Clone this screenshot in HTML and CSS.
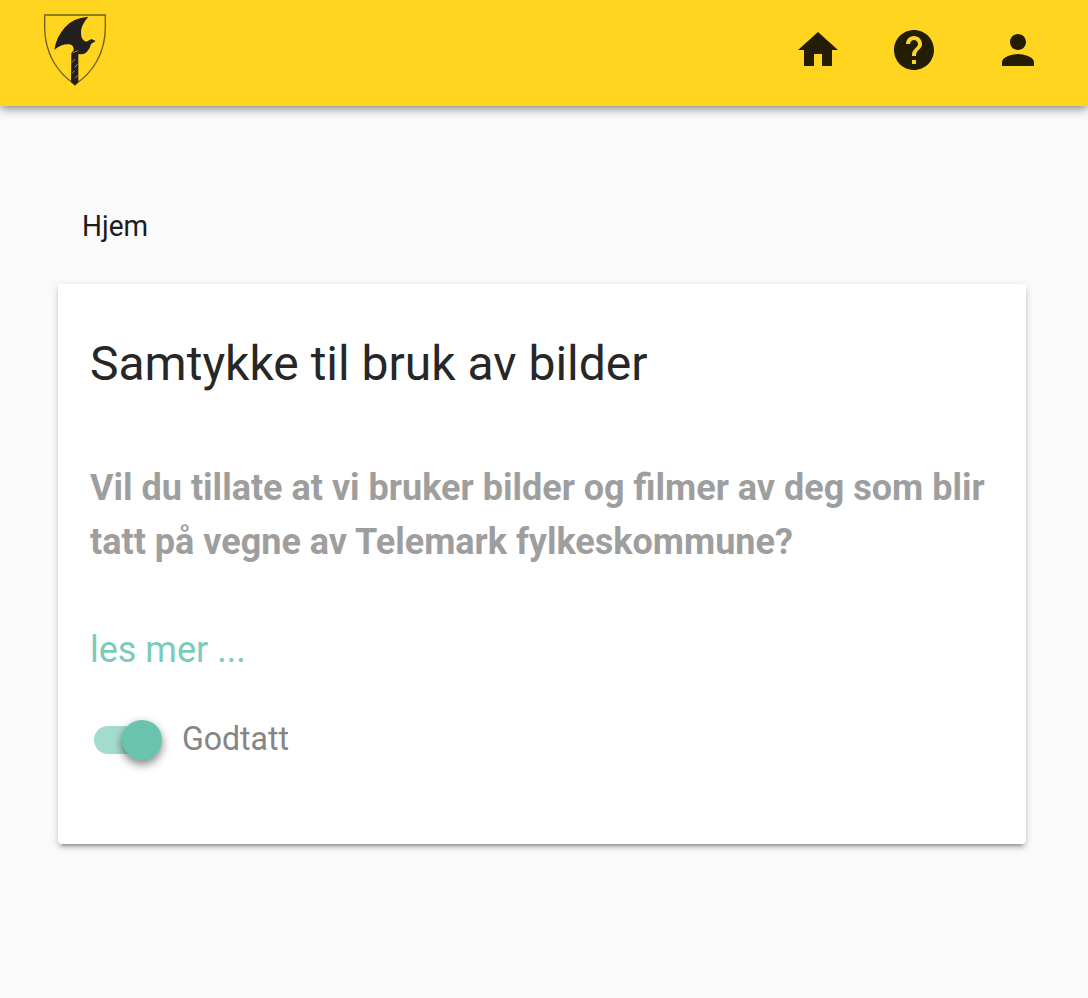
FILE: index.html
```html
<!DOCTYPE html>
<html lang="no">
<head>
<meta charset="utf-8">
<title>Samtykke</title>
<link rel="stylesheet" href="styles.css">
</head>
<body>
<header class="toolbar">
  <svg class="logo" viewBox="42 42 186 219" aria-label="Telemark">
    <path class="shield" d="M44 45H226V82C226 161 187 219 135 253C83 219 44 161 44 82Z"/>
    <path class="axe" d="M175 50Q127 54 105 82Q79 111 73 149Q98 130 119 133Q132 136 131 151L124 160L123 246L135 257L145 246V161Q161 166 171 155Q180 147 183 132L197 123L184 117L169 125Q154 121 153 101Q151 77 175 50Z"/>
    <path class="grip" d="M129 158L145 152M126 187L136 177M134 203L143 192M127 219L134 213M135 235L143 226"/>
  </svg>
  <nav class="actions">
    <svg class="icon" viewBox="0 0 24 24"><path d="M10 20v-6h4v6h5v-8h3L12 3 2 12h3v8z"/></svg>
    <svg class="icon" viewBox="0 0 24 24"><path d="M12 2C6.48 2 2 6.48 2 12s4.480 10 10 10 10-4.480 10-10S17.520 2 12 2zm1 17h-2v-2h2v2zm2.070-7.750l-.9.920C13.450 12.900 13 13.500 13 15h-2v-.5c0-1.100.45-2.100 1.170-2.830l1.240-1.260c.37-.36.59-.86.59-1.410 0-1.100-.9-2-2-2s-2 .9-2 2H8c0-2.210 1.790-4 4-4s4 1.790 4 4c0 .88-.36 1.680-.93 2.250z"/></svg>
    <svg class="icon person" viewBox="0 0 24 24"><path d="M12 12c2.210 0 4-1.790 4-4s-1.790-4-4-4-4 1.790-4 4 1.790 4 4 4zm0 2c-2.670 0-8 1.340-8 4v2h16v-2c0-2.660-5.330-4-8-4z"/></svg>
  </nav>
</header>
<main class="content">
  <nav class="crumb">Hjem</nav>
  <section class="card">
    <h1 class="title">Samtykke til bruk av bilder</h1>
    <p class="question">Vil du tillate at vi bruker bilder og filmer av deg som blir<br>tatt på vegne av Telemark fylkeskommune?</p>
    <a class="more">les mer ...</a>
    <div class="consent">
      <span class="switch"><span class="thumb"></span></span>
      <span class="label">Godtatt</span>
    </div>
  </section>
</main>
</body>
</html>
```
FILE: styles.css
```css
* { box-sizing: border-box; }
body {
  margin: 0;
  min-height: 998px;
  background: #fafafa;
  font-family: Roboto, sans-serif;
  color: #212121;
}
.toolbar {
  display: flex;
  justify-content: space-between;
  height: 106px;
  padding: 14px 46px 0 44px;
  background: #ffd520;
  box-shadow: 0 2px 10px rgba(0,0,0,.52);
}
.logo { width: 62px; height: 73px; }
.shield { fill: none; stroke: #6f5f20; stroke-width: 4; }
.axe { fill: #231f20; }
.grip { fill: none; stroke: #a68d24; stroke-width: 3; }
.actions { display: flex; gap: 48px; padding-top: 12px; }
.icon { width: 48px; height: 48px; fill: #231d05; }
.person { margin-left: 8px; }
.content { padding: 100px 62px 0 58px; }
.crumb { padding-left: 24px; font-size: 28px; line-height: 40px; color: #1c1c1c; transform: scaleY(1.07); }
.card {
  height: 560px;
  margin-top: 38px;
  padding: 48px 32px 0;
  background: #fff;
  border-radius: 4px;
  box-shadow: 0 6px 2px -4px rgba(0,0,0,.2), 0 4px 4px rgba(0,0,0,.14), 0 2px 10px rgba(0,0,0,.12);
}
.title { margin: 0; font-size: 48px; line-height: 64px; font-weight: 400; color: #272727; }
.question {
  margin: 65px 0 0;
  font-size: 36px;
  line-height: 54px;
  font-weight: 700;
  color: #9e9e9e;
  white-space: nowrap;
}
.more { display: block; margin-top: 54px; font-size: 36px; line-height: 54px; color: #7accb8; }
.consent { display: flex; align-items: center; height: 48px; margin-top: 39px; padding-left: 4px; }
.switch {
  display: flex;
  align-items: center;
  justify-content: flex-end;
  width: 68px;
  height: 28px;
  border-radius: 14px;
  background: linear-gradient(90deg, #a3dccd 54px, transparent 54px);
}
.thumb {
  width: 40px;
  height: 40px;
  flex: none;
  border-radius: 50%;
  background: #69c3ad;
  box-shadow: 0 4px 10px rgba(0,0,0,.5);
}
.label { margin: 0 0 3px 20px; font-size: 32px; line-height: 48px; color: #858585; transform: scaleY(1.04); }
```
